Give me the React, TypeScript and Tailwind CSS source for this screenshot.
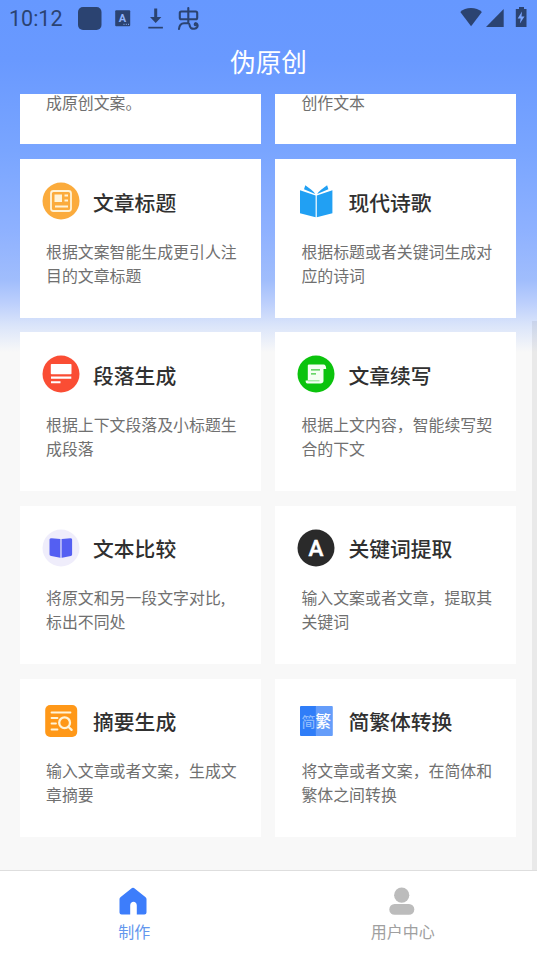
import type { ReactNode } from "react";

function NewsIcon() {
  return (
    <svg viewBox="0 0 38 38" className="size-[38px]">
      <circle cx="19" cy="19" r="18.5" fill="#fbab3c" />
      <rect x="9" y="9" width="20" height="20" rx="2.5" fill="none" stroke="#fff3d8" strokeWidth="1.8" />
      <rect x="12.5" y="12.5" width="7.5" height="7.5" fill="#fff3d8" />
      <path d="M22.5 13.5h3.5M22.5 18.5h3.5M13 24.5h13" stroke="#fff3d8" strokeWidth="2" />
    </svg>
  );
}

function BookIcon() {
  return (
    <svg viewBox="0 0 38 38" className="size-[38px]" fill="#21a0f3">
      <path d="M3 8.2 18.6 13.5v21.8L3 31.2zM35.4 8.2 19.8 13.5v21.8l15.6-4.1z" />
      <path d="M7 7.2 8.3 3.2 14 7.6q3 2.4 4.2 4.4zM31.4 7.2 30.1 3.2 24.4 7.6q-3 2.4-4.2 4.4z" />
    </svg>
  );
}

function ParagraphIcon() {
  return (
    <svg viewBox="0 0 38 38" className="size-[38px]">
      <circle cx="19" cy="19" r="18.5" fill="#fa4d34" />
      <rect x="8.8" y="9" width="20.7" height="10.3" rx="0.8" fill="#fff" />
      <path d="M9 21.6h20.3v2.2H9zM9 26.3h9.5v1.9H9z" fill="#fff" />
    </svg>
  );
}

function ScrollIcon() {
  return (
    <svg viewBox="0 0 38 38" className="size-[38px]">
      <circle cx="19" cy="19" r="18.5" fill="#0bc30d" />
      <path d="M11.5 9.5h15c1.8 0 2.7 1.5 2.7 4.5h-2.7v11.8c0 2-1.3 2.7-3 2.7H10.4c-1.3 0-1.8-1.3-1.8-3h2.2V10.2z" fill="#f4fff2" />
      <path d="M14 14.8h9M14 18.8h5" stroke="#3cc93c" strokeWidth="1.2" />
      <path d="M11 25.8h11.5" stroke="#6ad96a" strokeWidth="0.8" />
    </svg>
  );
}

function CompareIcon() {
  return (
    <svg viewBox="0 0 38 38" className="size-[38px]">
      <circle cx="19" cy="19" r="18.5" fill="#efedfb" />
      <path d="M9.6 9.2 18.3 10v18.7l-9-1.7q-1.8-.2-1.8-1.5V10.6q0-1.4 2.1-1.4zM28.4 9.2 20 10v18.7l8.8-1.7q1.3-.2 1.3-1.5V10.6q0-1.4-1.7-1.4z" fill="#545ff2" />
      <path d="M19.2 10v18.8" stroke="#a6abf6" strokeWidth="1.5" />
    </svg>
  );
}

function KeywordIcon() {
  return (
    <svg viewBox="0 0 38 38" className="size-[38px]">
      <circle cx="19" cy="19" r="18.5" fill="#2a2a2a" />
      <text x="19" y="27" textAnchor="middle" fontSize="22.5" fontWeight="500" fill="#fff" stroke="#fff" strokeWidth="0.5" className="font-['Roboto',sans-serif]">A</text>
    </svg>
  );
}

function SummaryIcon() {
  return (
    <svg viewBox="0 0 38 38" className="size-[38px]">
      <rect x="3.2" y="3" width="32" height="32" rx="5" fill="#ff9818" />
      <g fill="none" stroke="#fff4d8" strokeWidth="1.8" strokeLinecap="round">
        <path d="M9.5 10.5h19M9.5 16h6M9.5 21.5h4.5M9.5 27.5h6" />
        <circle cx="22.6" cy="20.7" r="5.4" strokeWidth="2.3" />
        <path d="m26.6 25 3 2.9" strokeWidth="2.3" />
      </g>
    </svg>
  );
}

function ConvertIcon() {
  return (
    <svg viewBox="0 0 38 38" className="size-[38px] font-['Noto_Sans_CJK_SC',sans-serif]">
      <rect x="3" y="4" width="16.8" height="30" rx="1" fill="#2f7df8" />
      <rect x="18.8" y="4" width="17" height="30" rx="1" fill="#659dfa" />
      <text x="4.5" y="25" fontSize="14" fontWeight="500" fill="#8dbafc">简</text>
      <text x="18.6" y="25" fontSize="15.5" fontWeight="500" fill="#fff">繁</text>
    </svg>
  );
}

type Feature = { icon: ReactNode; title: string; lines: [string, string] };

const features: Feature[] = [
  { icon: <NewsIcon />, title: "文章标题", lines: ["根据文案智能生成更引人注", "目的文章标题"] },
  { icon: <BookIcon />, title: "现代诗歌", lines: ["根据标题或者关键词生成对", "应的诗词"] },
  { icon: <ParagraphIcon />, title: "段落生成", lines: ["根据上下文段落及小标题生", "成段落"] },
  { icon: <ScrollIcon />, title: "文章续写", lines: ["根据上文内容，智能续写契", "合的下文"] },
  { icon: <CompareIcon />, title: "文本比较", lines: ["将原文和另一段文字对比,", "标出不同处"] },
  { icon: <KeywordIcon />, title: "关键词提取", lines: ["输入文案或者文章，提取其", "关键词"] },
  { icon: <SummaryIcon />, title: "摘要生成", lines: ["输入文章或者文案，生成文", "章摘要"] },
  { icon: <ConvertIcon />, title: "简繁体转换", lines: ["将文章或者文案，在简体和", "繁体之间转换"] },
];

function FeatureCard({ icon, title, lines }: Feature) {
  return (
    <article className="h-[158.3px] bg-white pt-[23px]">
      <div className="flex h-[38px] items-center pl-[22px]">
        {icon}
        <h2 className="ml-[13px] pt-px text-[20.8px] leading-[30px] font-medium text-[#303030]">{title}</h2>
      </div>
      <p className="mt-[19.6px] pl-[26px] text-[15.9px] leading-6 whitespace-nowrap text-[#707070]">
        {lines[0]}
        <br />
        {lines[1]}
      </p>
    </article>
  );
}

function ClippedCard({ text }: { text: string }) {
  return (
    <article className="h-[50.9px] bg-white pl-[26px]">
      <p className="text-[15.9px] leading-[18px] text-[#707070]">{text}</p>
    </article>
  );
}

function StatusBar() {
  return (
    <div className="flex h-[37px] items-center text-[#2b4371]">
      <span className="ml-[9px] w-[55px] font-['Roboto',sans-serif] text-[21.5px] leading-none whitespace-nowrap">10:12</span>
      <svg viewBox="0 0 130 37" className="ml-[11px] h-[37px] w-[130px]" fill="currentColor">
        <rect x="3" y="7" width="23.5" height="23" rx="5" />
        <rect x="40.2" y="10.3" width="15" height="16" rx="1" />
        <text x="47.5" y="21.8" textAnchor="middle" fontSize="11" fontWeight="700" fill="#8fb3fc" className="font-['Roboto',sans-serif]">A</text>
        <path d="M48.5 24.3h1M50.8 24.3h1M53 24.3h1" stroke="#8fb3fc" />
        <path d="M79.2 8.5h3V17h4.2l-5.7 6-5.7-6h4.2z" />
        <path d="M73.3 26.8h14.6v1.7H73.3z" />
        <g fill="none" stroke="currentColor" strokeWidth="2.1" strokeLinecap="round" strokeLinejoin="round">
          <rect x="104.8" y="11.5" width="17.4" height="7.8" rx="1.5" />
          <path d="M113.3 8v15.2M104 29c.4-3.8 2-5.8 5-5.8h4.3c2 0 .5 3 2.5 4.6 2 1.5 5.2 1.2 6.4-.6 1-1.8.2-4-1.7-3.8" />
          <circle cx="120.5" cy="24.3" r="0.8" />
        </g>
      </svg>
      <svg viewBox="0 0 72 37" className="ml-auto mr-[8px] h-[37px] w-[72px]" fill="currentColor">
        <path d="M3.3 12c5-5.2 16.2-5.2 21.6 0L14.1 26.3z" />
        <path d="M46.7 9v18H29z" />
        <path d="M62 7h5v2h2.5v18H58.8V9H62z" />
        <path d="m65 11.5-4.3 7h3l-.8 5 4.6-7h-3z" fill="#78a4ff" />
      </svg>
    </div>
  );
}

export default function App() {
  return (
    <div className="relative flex h-[956px] w-[537px] flex-col overflow-hidden bg-[#f8f8f8] bg-[linear-gradient(180deg,#6698ff_0px,#6999ff_60px,#79a5ff_150px,#8eb1ff_230px,#a0bdfc_280px,#bccffc_303px,#dbe5fa_326px,#f8f8f8_352px)] font-['Noto_Sans_CJK_SC',sans-serif]">
      <StatusBar />
      <header className="flex h-[56.5px] items-center justify-center">
        <h1 className="-mt-[8px] text-[25.6px] leading-8 text-white">伪原创</h1>
      </header>

      <main className="grid h-[776.5px] grid-cols-2 content-start gap-[14.9px] overflow-hidden pr-[21px] pl-5">
        <ClippedCard text="成原创文案。" />
        <ClippedCard text="创作文本" />
        {features.map((feature) => (
          <FeatureCard key={feature.title} {...feature} />
        ))}
      </main>

      <div className="absolute top-[321px] right-0 h-[549px] w-[5px] bg-black/[0.06]" />

      <nav className="grid flex-1 grid-cols-2 border-t border-[#dedede] bg-white">
        <div className="flex flex-col items-center pt-4">
          <svg viewBox="0 0 28 28" className="-ml-0.5 size-7" fill="#3d7dfb">
            <path d="M13 1.1q1-.8 2 0L26.3 9.9q1.2 1 1.2 2.2v13.3q0 2.1-2.1 2.1h-7.6v-9c0-4.9-6.6-4.9-6.6 0v9H2.6q-2.1 0-2.1-2.1V12.1q0-1.2 1.2-2.2z" />
          </svg>
          <span className="mt-1 text-[16px] leading-6 text-[#6396ed]">制作</span>
        </div>
        <div className="flex flex-col items-center pt-4">
          <svg viewBox="0 0 28 28" className="-ml-px size-7" fill="#bcbcbc">
            <circle cx="13.7" cy="8.2" r="7.6" />
            <rect x="1.3" y="17" width="25" height="10.7" rx="5.3" />
          </svg>
          <span className="mt-1 text-[16px] leading-6 text-[#a0a0a0]">用户中心</span>
        </div>
      </nav>
    </div>
  );
}
